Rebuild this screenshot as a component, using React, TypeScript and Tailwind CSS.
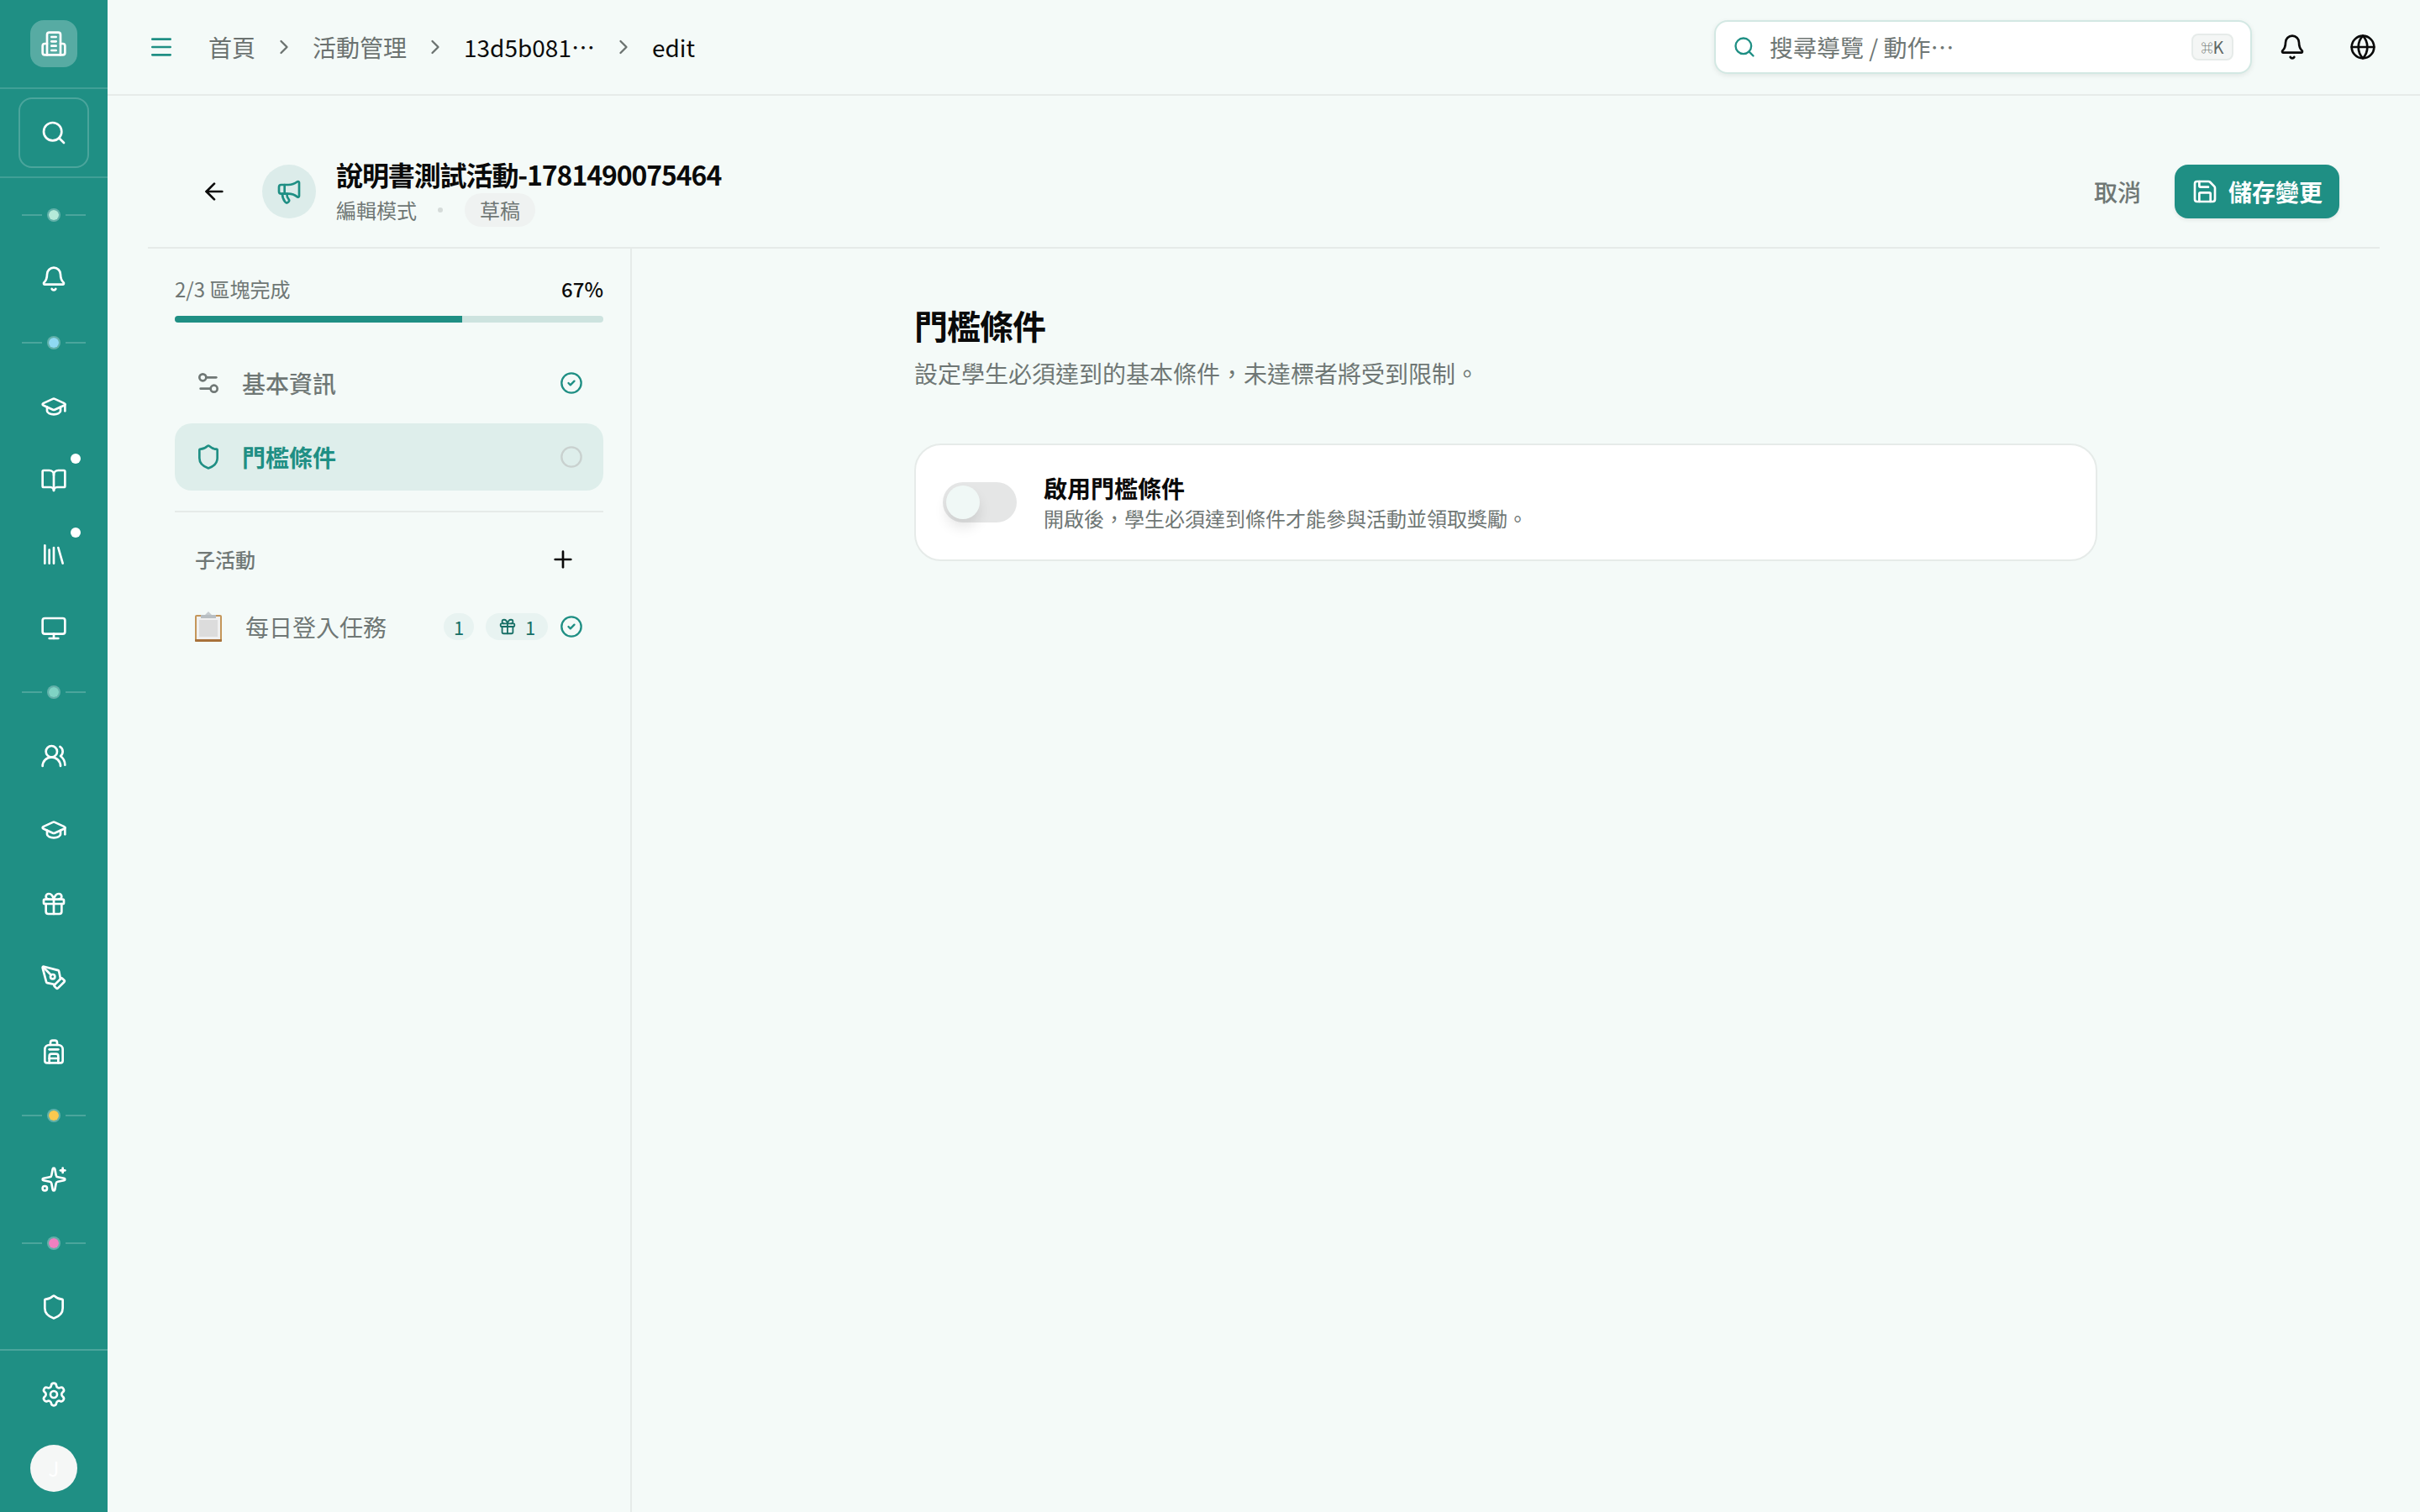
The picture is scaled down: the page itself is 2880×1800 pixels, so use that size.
import {
  ArrowLeft,
  Backpack,
  Bell,
  BookOpen,
  ChevronRight,
  Circle,
  CircleCheck,
  Gift,
  Globe,
  GraduationCap,
  Library,
  Megaphone,
  Menu,
  Monitor,
  PenTool,
  Plus,
  Save,
  Search,
  Settings,
  Settings2,
  Shield,
  Sparkles,
  UsersRound,
} from 'lucide-react';

const font = "font-['Noto_Sans_CJK_TC','Noto_Sans',sans-serif]";

function RailDot({ color }: { color: string }) {
  return (
    <div className="flex h-[64px] items-center justify-center gap-[6px]">
      <span className="h-[2px] w-[24px] bg-white/20" />
      <span className={`h-[16px] w-[16px] rounded-full border-[2px] border-white/30 bg-clip-padding ${color}`} />
      <span className="h-[2px] w-[24px] bg-white/20" />
    </div>
  );
}

function RailItem({ children, dot }: { children: React.ReactNode; dot?: boolean }) {
  return (
    <div className="relative flex h-[88px] items-center justify-center text-white">
      {children}
      {dot && <span className="absolute right-[32px] top-[12px] h-[12px] w-[12px] rounded-full bg-white" />}
    </div>
  );
}

function LogoIcon() {
  return (
    <svg viewBox="0 0 24 24" fill="none" stroke="currentColor" strokeWidth={2} strokeLinecap="round" strokeLinejoin="round" className="h-[32px] w-[32px]">
      <path d="M6 22V4a2 2 0 0 1 2-2h8a2 2 0 0 1 2 2v18Z" />
      <path d="M6 12H4a2 2 0 0 0-2 2v6a2 2 0 0 0 2 2h2" />
      <path d="M18 12h2a2 2 0 0 1 2 2v6a2 2 0 0 1-2 2h-2" />
      <path d="M10 6h4" />
      <path d="M10 10h4" />
      <path d="M10 14h4" />
      <path d="M10 18h4" />
    </svg>
  );
}

function Sidebar() {
  const icon = 'h-[32px] w-[32px]';
  return (
    <aside className="flex h-[1800px] w-[128px] shrink-0 flex-col bg-[#1f8f84]">
      <div className="flex h-[106px] items-center justify-center border-b-[2px] border-white/15">
        <div className="flex h-[56px] w-[56px] items-center justify-center rounded-[16px] bg-white/25 text-white">
          <LogoIcon />
        </div>
      </div>
      <div className="flex h-[106px] items-center justify-center border-b-[2px] border-white/15">
        <div className="flex h-[84px] w-[84px] items-center justify-center rounded-[16px] border-[2px] border-white/20 text-white">
          <Search className={icon} strokeWidth={2} />
        </div>
      </div>
      <div className="mt-[12px] flex flex-1 flex-col">
        <RailDot color="bg-[#b5ead9]" />
        <RailItem><Bell className={icon} /></RailItem>
        <RailDot color="bg-[#8fd9f2]" />
        <RailItem><GraduationCap className={icon} /></RailItem>
        <RailItem dot><BookOpen className={icon} /></RailItem>
        <RailItem dot><Library className={icon} /></RailItem>
        <RailItem><Monitor className={icon} /></RailItem>
        <RailDot color="bg-[#7fd3c4]" />
        <RailItem><UsersRound className={icon} /></RailItem>
        <RailItem><GraduationCap className={icon} /></RailItem>
        <RailItem><Gift className={icon} /></RailItem>
        <RailItem><PenTool className={icon} /></RailItem>
        <RailItem><Backpack className={icon} /></RailItem>
        <RailDot color="bg-[#fbc94f]" />
        <RailItem><Sparkles className={icon} /></RailItem>
        <RailDot color="bg-[#f080c0]" />
        <RailItem><Shield className={icon} /></RailItem>
      </div>
      <div className="flex h-[194px] shrink-0 flex-col items-center border-t-[2px] border-white/20 pt-[36px] text-white">
        <Settings className={icon} />
        <div className="mt-[44px] flex h-[56px] w-[56px] items-center justify-center rounded-full bg-[#f5f7f6] text-[24px] text-white">
          J
        </div>
      </div>
    </aside>
  );
}

function TopBar() {
  return (
    <header className="flex h-[114px] items-center border-b-[2px] border-[#e6ebe9] pl-[48px] pr-[52px]">
      <Menu className="h-[32px] w-[32px] text-[#1f8f84]" />
      <nav className="ml-[40px] flex items-center text-[28px]">
        <span className="text-[#6b7270]">首頁</span>
        <ChevronRight className="mx-[20px] h-[28px] w-[28px] text-[#6b7270]" />
        <span className="text-[#6b7270]">活動管理</span>
        <ChevronRight className="mx-[20px] h-[28px] w-[28px] text-[#6b7270]" />
        <span className="flex text-[#0a0a0a]">
          <span>13d5b081</span>
          <span>…</span>
        </span>
        <ChevronRight className="mx-[20px] h-[28px] w-[28px] text-[#6b7270]" />
        <span className="text-[#0a0a0a]">edit</span>
      </nav>
      <div className="ml-auto flex h-[64px] w-[640px] items-center rounded-[16px] border-[2px] border-[#d3e8e3] bg-white pl-[20px] pr-[20px] shadow-[0_2px_6px_rgba(0,0,0,0.08)]">
        <Search className="h-[28px] w-[28px] text-[#1f8f84]" />
        <span className="ml-[16px] text-[28px] text-[#6f7775]">搜尋導覽 / 動作…</span>
        <span className="ml-auto flex h-[32px] w-[50px] items-center justify-center rounded-[8px] border-[2px] border-[#e6ebe9] bg-[#f4f6f5] text-[20px] text-[#5f6765]">
          <span className="text-[14px]">⌘</span>K
        </span>
      </div>
      <Bell className="ml-[32px] h-[32px] w-[32px] text-[#0a0a0a]" />
      <Globe className="ml-[52px] h-[32px] w-[32px] text-[#0a0a0a]" />
    </header>
  );
}

function PageHeader() {
  return (
    <div className="flex h-[182px] items-center border-b-[2px] border-[#e6ebe9] pt-[48px]">
      <ArrowLeft className="ml-[63px] h-[32px] w-[32px] text-[#0a0a0a]" />
      <div className="ml-[41px] flex h-[64px] w-[64px] items-center justify-center rounded-full bg-[#dcecea]">
        <Megaphone className="h-[32px] w-[32px] text-[#1f8f84]" />
      </div>
      <div className="ml-[24px] flex flex-col">
        <h1 className="mb-[2px] text-[32px] font-semibold leading-[42px] tracking-[-1.1px] text-[#0a0a0a]">說明書測試活動-1781490075464</h1>
        <div className="flex items-center text-[24px] text-[#6f7775]">
          <span>編輯模式</span>
          <span className="ml-[25px] h-[6px] w-[6px] rounded-full bg-[#d5dbd9]" />
          <span className="ml-[26px] rounded-full bg-[#eff2f1] px-[18px] leading-[40px]">草稿</span>
        </div>
      </div>
      <div className="ml-auto flex items-center">
        <span className="text-[28px] font-medium text-[#6f7775]">取消</span>
        <button className="ml-[40px] mr-[48px] flex h-[64px] items-center gap-[12px] rounded-[16px] bg-[#1f8f84] pl-[20px] pr-[20px] text-[28px] font-semibold text-white shadow-[0_2px_4px_rgba(0,0,0,0.08)]">
          <Save className="h-[32px] w-[32px]" />
          儲存變更
        </button>
      </div>
    </div>
  );
}

function Clipboard() {
  return (
    <svg viewBox="0 0 32 36" className="h-[36px] w-[32px]">
      <rect x="0" y="4" width="32" height="32" rx="2" fill="#c4965a" />
      <rect x="0" y="33" width="32" height="3" rx="1" fill="#a8713a" />
      <rect x="2" y="6" width="28" height="27" fill="#f0f0f0" />
      <rect x="5" y="10" width="22" height="20" fill="#dcdcdc" />
      <rect x="7" y="4" width="18" height="4" fill="#b8bec2" />
      <path d="M16 0l4 4H12z" fill="#c6ccd0" />
    </svg>
  );
}

function StepList() {
  return (
    <aside className="w-[544px] shrink-0 border-r-[2px] border-[#e6ebe9] pr-[32px] pt-[30px]">
      <div className="flex items-center justify-between text-[24px] leading-[36px]">
        <span className="text-[#6f7775]">2/3 區塊完成</span>
        <span className="font-medium text-[#0a0a0a]">67%</span>
      </div>
      <div className="mt-[14px] h-[8px] overflow-hidden rounded-full bg-[#cde3df]">
        <div className="h-full w-[67%] bg-[#1f8f84]" />
      </div>
      <div className="mt-[32px] flex h-[80px] items-center rounded-[20px] px-[24px] text-[#6f7775]">
        <Settings2 className="h-[32px] w-[32px]" />
        <span className="ml-[24px] text-[28px] font-medium">基本資訊</span>
        <CircleCheck className="ml-auto h-[28px] w-[28px] text-[#1f8f84]" />
      </div>
      <div className="mt-[8px] flex h-[80px] items-center rounded-[20px] bg-[#deeeeb] px-[24px]">
        <Shield className="h-[32px] w-[32px] text-[#1f8f84]" />
        <span className="ml-[24px] text-[28px] font-semibold text-[#1f8f84]">門檻條件</span>
        <Circle className="ml-auto h-[28px] w-[28px] text-[#c9d1cf]" />
      </div>
      <div className="mt-[24px] border-t-[2px] border-[#e6ebe9]" />
      <div className="mt-[24px] flex h-[64px] items-center px-[24px] text-[24px] font-medium text-[#6f7775]">
        子活動
        <Plus className="ml-auto mr-[8px] h-[32px] w-[32px] text-[#0a0a0a]" />
      </div>
      <div className="mt-[16px] flex h-[64px] items-center px-[24px]">
        <Clipboard />
        <span className="ml-[28px] text-[28px] text-[#6f7775]">每日登入任務</span>
        <div className="ml-auto flex items-center gap-[14px] text-[22px] text-[#176f66]">
          <span className="flex h-[32px] w-[36px] items-center justify-center rounded-full bg-[#e8f3f1]">1</span>
          <span className="flex h-[32px] w-[74px] items-center justify-center gap-[10px] rounded-full bg-[#e8f3f1]">
            <Gift className="h-[22px] w-[22px]" />1
          </span>
          <CircleCheck className="h-[28px] w-[28px] text-[#1f8f84]" />
        </div>
      </div>
    </aside>
  );
}

function MainPanel() {
  return (
    <main className="flex-1 pt-[64px]">
      <div className="mx-auto w-[1408px]">
        <h2 className="text-[40px] font-semibold leading-[54px] tracking-tight text-[#0a0a0a]">門檻條件</h2>
        <p className="mt-[10px] text-[28px] leading-[40px] text-[#6f7775]">設定學生必須達到的基本條件，未達標者將受到限制。</p>
        <div className="mt-[64px] flex h-[140px] items-center rounded-[32px] border-[2px] border-[#e6ebe9] bg-white px-[32px]">
          <div className="flex h-[48px] w-[88px] items-center rounded-full bg-[#e5e6e6] px-[4px]">
            <span className="h-[40px] w-[40px] rounded-full bg-[#f0f8f6] shadow-[0_10px_15px_rgba(0,0,0,0.1)]" />
          </div>
          <div className="ml-[32px]">
            <div className="text-[28px] font-semibold leading-[36px] text-[#0a0a0a]">啟用門檻條件</div>
            <div className="mt-[2px] text-[24px] leading-[32px] text-[#6f7775]">開啟後，學生必須達到條件才能參與活動並領取獎勵。</div>
          </div>
        </div>
      </div>
    </main>
  );
}

export default function App() {
  return (
    <div className={`flex h-[1800px] overflow-hidden bg-[#f4faf8] ${font}`}>
      <Sidebar />
      <div className="flex min-w-0 flex-1 flex-col">
        <TopBar />
        <div className="flex flex-1 flex-col pl-[48px] pr-[48px]">
          <PageHeader />
          <div className="flex flex-1 pl-[32px]">
            <StepList />
            <MainPanel />
          </div>
        </div>
      </div>
    </div>
  );
}
